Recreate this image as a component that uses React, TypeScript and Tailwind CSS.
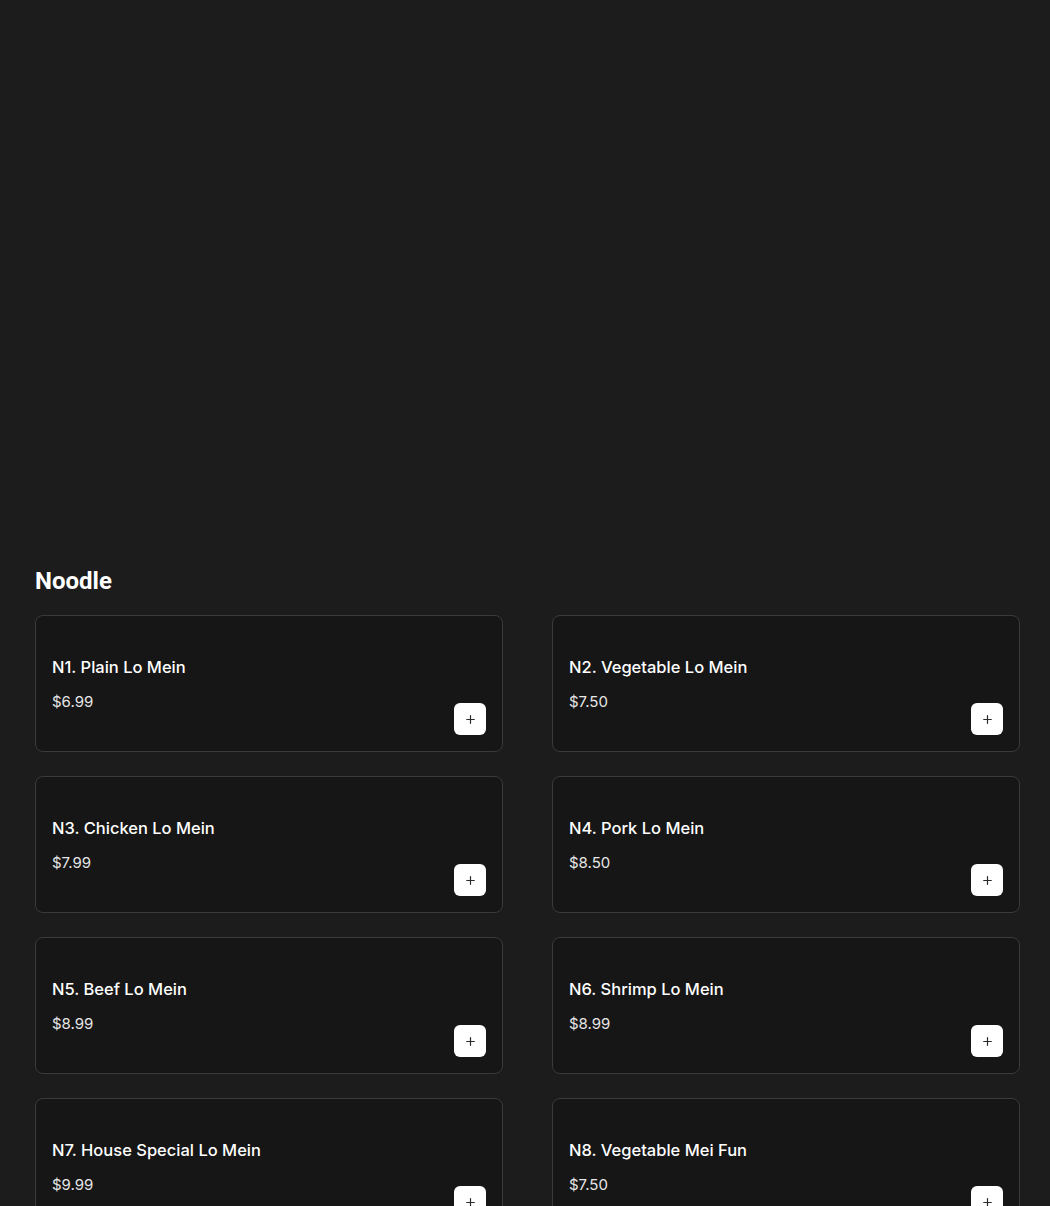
import { Plus } from "lucide-react"

type Item = {
  name: string
  price: string
}

const items: Item[] = [
  { name: "N1. Plain Lo Mein", price: "$6.99" },
  { name: "N2. Vegetable Lo Mein", price: "$7.50" },
  { name: "N3. Chicken Lo Mein", price: "$7.99" },
  { name: "N4. Pork Lo Mein", price: "$8.50" },
  { name: "N5. Beef Lo Mein", price: "$8.99" },
  { name: "N6. Shrimp Lo Mein", price: "$8.99" },
  { name: "N7. House Special Lo Mein", price: "$9.99" },
  { name: "N8. Vegetable Mei Fun", price: "$7.50" },
]

function MenuCard({ item }: { item: Item }) {
  return (
    <div className="flex h-[137px] justify-between rounded-lg border border-[#3a3a3a] bg-[#161616] p-4">
      <div className="flex flex-col pt-[23px]">
        <h3 className="text-[16.5px] leading-6 font-medium text-white">{item.name}</h3>
        <p className="mt-[11px] text-[15px] leading-6 text-[#e6e6e6]">{item.price}</p>
      </div>
      <button className="grid h-8 w-8 place-items-center self-end rounded-md bg-white text-[#2a2a2a]">
        <Plus size={13} strokeWidth={2.2} />
      </button>
    </div>
  )
}

export default function App() {
  return (
    <div className="min-h-[1206px] bg-[#1c1c1c] pt-[563px] pr-[30px] pb-10 pl-[35px] [font-family:Inter,'Liberation_Sans',sans-serif]">
      <h2 className="text-[24px] leading-9 font-bold text-white [font-family:Roboto,'Liberation_Sans',sans-serif]">
        Noodle
      </h2>
      <div className="mt-4 grid grid-cols-2 gap-x-[49px] gap-y-[24px]">
        {items.map((item) => (
          <MenuCard key={item.name} item={item} />
        ))}
      </div>
    </div>
  )
}
